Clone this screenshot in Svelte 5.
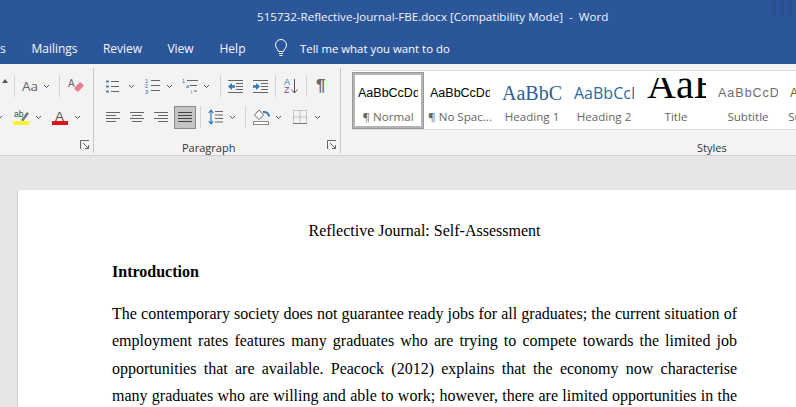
<script>
  const tabs = [
    { label: 's', width: 18 },
    { label: 'Mailings', width: 73 },
    { label: 'Review', width: 63 },
    { label: 'View', width: 53 },
    { label: 'Help', width: 51 }
  ];
  const styles = [
    { sample: 'AaBbCcDd', name: '¶ Normal', cls: 'normal' },
    { sample: 'AaBbCcDd', name: '¶ No Spac...', cls: 'normal' },
    { sample: 'AaBbCc', name: 'Heading 1', cls: 'h1' },
    { sample: 'AaBbCcDd', name: 'Heading 2', cls: 'h2' },
    { sample: 'AaBbC', name: 'Title', cls: 'title' },
    { sample: 'AaBbCcDd', name: 'Subtitle', cls: 'subtitle' },
    { sample: 'AaBbCcDd', name: 'Subtle Em...', cls: 'subtle' }
  ];
</script>

{#snippet chev()}
  <svg class="chev" width="7" height="5" viewBox="0 0 7 5"><path d="M1 1l2.500 2.500L6 1" fill="none" stroke="#555" stroke-width="1"/></svg>
{/snippet}

{#snippet launcher()}
  <svg class="launcher" width="10" height="10" viewBox="0 0 10 10"><path d="M.5 9V.5H9M3 3l5.500 5.500M8.500 5v3.500H5" fill="none" stroke="#666" stroke-width="1"/></svg>
{/snippet}

{#snippet lines(rows)}
  <svg width="16" height="14" viewBox="0 0 16 14">
    {#each rows as r, i}
      <path d={`M${r[0]} ${2.5 + i * 3}H${r[1]}`} stroke="#666" stroke-width="1"/>
    {/each}
  </svg>
{/snippet}

<div class="word">
  <header class="titlebar">
    <div class="doc-title">515732-Reflective-Journal-FBE.docx [Compatibility Mode]&nbsp; -&nbsp; Word</div>
    <nav class="tabs">
      {#each tabs as t}
        <span class="tab" style="width:{t.width}px">{t.label}</span>
      {/each}
      <svg class="bulb" width="14" height="18" viewBox="0 0 14 18"><path d="M4.500 12.500C4 10 1.500 9 1.500 6a5.500 5.500 0 0 1 11 0c0 3-2.500 4-3 6.500zM5 14.500h4M5.500 16.500h3" fill="none" stroke="#fff" stroke-width="1"/></svg>
      <span class="tell">Tell me what you want to do</span>
    </nav>
  </header>

  <section class="ribbon">
    <div class="group font">
      <div class="row r1 font-r1">
        <svg class="up" width="6" height="4" viewBox="0 0 6 4"><path d="M0 4l3-4 3 4z" fill="#555"/></svg>
        <i class="sep"></i>
        <span class="aa">Aa</span>
        {@render chev()}
        <i class="sep"></i>
        <svg width="16" height="16" viewBox="0 0 16 16"><path d="M6.500 10.500l5.500-6 3.500 3-5.500 6z" fill="#e87d8c" stroke="#e87d8c" stroke-linejoin="round"/><text x="0" y="9" font-size="10" fill="#666" font-family="Liberation Sans">A</text></svg>
      </div>
      <div class="row r2 font-r2">
        {@render chev()}
        <svg width="17" height="17" viewBox="0 0 17 17"><text x="1" y="8" font-size="8.500" fill="#444" font-family="Liberation Sans">ab</text><path d="M8 11l6-8 2 1.500-6 8z" fill="#777"/><rect x="0" y="12" width="16" height="4" fill="#f9f22f"/></svg>
        {@render chev()}
        <svg width="16" height="17" viewBox="0 0 16 17"><text x="3" y="11.500" font-size="13.500" fill="#555" font-family="Liberation Sans">A</text><rect x="0" y="12" width="16" height="4" fill="#e0111d"/></svg>
        {@render chev()}
      </div>
      {@render launcher()}
    </div>

    <div class="group para">
      <div class="row r1 para-r1">
        <svg width="16" height="15" viewBox="0 0 16 15"><path d="M6 2.500h8M6 7.500h8M6 12.500h8" stroke="#666"/><path d="M1 2.500h3M1 7.500h3M1 12.500h3" stroke="#5a88b5" stroke-width="2"/></svg>
        {@render chev()}
        <svg width="16" height="16" viewBox="0 0 16 16"><path d="M6 2.500h9M6 7.500h9M6 12.500h9" stroke="#666"/><text x="0" y="5" font-size="5.500" fill="#2b6aa8" font-family="Liberation Sans">1</text><text x="0" y="10" font-size="5.500" fill="#2b6aa8" font-family="Liberation Sans">2</text><text x="0" y="15.500" font-size="5.500" fill="#2b6aa8" font-family="Liberation Sans">3</text></svg>
        {@render chev()}
        <svg width="17" height="16" viewBox="0 0 17 16"><path d="M5 2.500h11M8 7.500h7M12 13h3" stroke="#666"/><text x="0" y="5" font-size="5.500" fill="#2b6aa8" font-family="Liberation Sans">1</text><text x="4" y="10" font-size="5.500" fill="#2b6aa8" font-family="Liberation Sans">a</text><text x="9" y="15.500" font-size="5.500" fill="#2b6aa8" font-family="Liberation Sans">i</text></svg>
        {@render chev()}
        <i class="sep"></i>
        <svg width="17" height="13" viewBox="0 0 17 13"><path d="M1 .5h15M9 3.500h7M9 6.500h7M9 9.500h7M1 12.500h15" stroke="#666"/><path d="M1 6.500l4-3.500v2.200h3v2.600H5V10z" fill="#2f79b9"/></svg>
        <svg width="17" height="13" viewBox="0 0 17 13"><path d="M1 .5h15M9 3.500h7M9 6.500h7M9 9.500h7M1 12.500h15" stroke="#666"/><path d="M8 6.500L4 3v2.200H1v2.600h3V10z" fill="#2f79b9"/></svg>
        <i class="sep"></i>
        <span class="sort"><span class="az"><b class="a">A</b><b class="z">Z</b></span><svg width="7" height="15" viewBox="0 0 7 15"><path d="M3.500 0v14M.5 10.500l3 3.500 3-3.500" fill="none" stroke="#555"/></svg></span>
        <i class="sep"></i>
        <span class="pilcrow">¶</span>
      </div>
      <div class="row r2 para-r2">
        {@render lines([[1,15],[1,11],[1,15],[1,11]])}
        {@render lines([[1,15],[3,13],[1,15],[3,13]])}
        {@render lines([[1,15],[5,15],[1,15],[5,15]])}
        <span class="align-active">{@render lines([[1,15],[1,15],[1,15],[1,15]])}</span>
        <i class="sep"></i>
        <svg width="16" height="16" viewBox="0 0 16 16"><path d="M7 2.500h8M7 6h8M7 9.500h8M7 13h8" stroke="#666"/><path d="M3 1v14M.8 4L3 1l2.200 3M.8 12L3 15l2.200-3" fill="none" stroke="#2f79b9" stroke-width="1.200"/></svg>
        {@render chev()}
        <i class="sep"></i>
        <svg width="17" height="16" viewBox="0 0 17 16"><path d="M6 1L1.500 6 6 10.500 10.500 6z" fill="#fff" stroke="#666"/><path d="M10 3c3.500-.5 6 1.500 6 4.500" fill="none" stroke="#2f79b9" stroke-width="2"/><rect x=".5" y="12.500" width="15" height="3" fill="#fff" stroke="#888"/></svg>
        {@render chev()}
        <svg width="14" height="14" viewBox="0 0 14 14"><path d="M.5.500h13v13H.5zM7 .5v13M.5 7h13" fill="none" stroke="#999" stroke-dasharray="1 1"/><path d="M0 13.500h14" stroke="#777"/></svg>
        {@render chev()}
      </div>
      <span class="group-label para-label">Paragraph</span>
      {@render launcher()}
    </div>

    <div class="group styles-group">
      <div class="gallery">
        {#each styles as s, i}
          <div class="style" class:selected={i === 0}>
            <div class="sample {s.cls}">{s.sample}</div>
            <div class="name">{s.name}</div>
          </div>
        {/each}
      </div>
      <span class="group-label styles-label">Styles</span>
    </div>
  </section>

  <main class="canvas">
    <article class="page">
      <h1>Reflective Journal: Self-Assessment</h1>
      <h2>Introduction</h2>
      <p>The contemporary society does not guarantee ready jobs for all graduates; the current situation of employment rates features many graduates who are trying to compete towards the limited job opportunities that are available. Peacock (2012) explains that the economy now characterise many graduates who are willing and able to work; however, there are limited opportunities in the market for all of them to be employed at once and this is the challenge.</p>
    </article>
  </main>
</div>

<style>
  :global(body) {
    margin: 0;
    overflow: hidden;
  }
  .word {
    width: 796px;
    height: 407px;
    overflow: hidden;
    font-family: "Open Sans", "Noto Sans", sans-serif;
    background: #e6e6e6;
    display: flex;
    flex-direction: column;
  }
  .titlebar {
    position: relative;
    height: 64px;
    background: #2b579a;
    color: #fff;
    flex: none;
  }
  /* faint window stripes showing through at the top right */
  .titlebar::after {
    content: "";
    position: absolute;
    top: 0;
    right: 0;
    width: 24px;
    height: 16px;
    background: repeating-linear-gradient(90deg, #27508f 0 4px, #2b579a 4px 8px);
  }
  .doc-title {
    padding: 9px 0 0 257px;
    height: 23px;
    white-space: nowrap;
    line-height: 15px;
    font-size: 11.6px;
    color: #f2f4f8;
  }
  .tabs {
    display: flex;
    align-items: center;
    height: 32px;
  }
  .tab {
    flex: none;
    text-align: center;
    font-size: 12px;
    color: #f4f6fa;
  }
  .tab:first-child {
    text-align: right;
    padding-right: 13px;
    box-sizing: border-box;
  }
  .bulb {
    margin-left: 16px;
    margin-right: 12px;
  }
  .tell {
    font-size: 11.4px;
    white-space: nowrap;
  }
  .ribbon {
    height: 92px;
    flex: none;
    display: flex;
    background: #f3f3f3;
    border-bottom: 1px solid #d0d0d0;
    box-sizing: border-box;
    padding-top: 4px;
  }
  .group {
    position: relative;
    flex: none;
    box-sizing: border-box;
    height: 85px;
    border-right: 1px solid #c6c6c6;
  }
  .font {
    width: 94px;
  }
  .para {
    width: 247px;
  }
  .styles-group {
    flex: 1;
    border-right: none;
  }
  .row {
    display: grid;
    align-items: center;
    justify-items: start;
    height: 30px;
  }
  .r1 {
    margin-top: 3px;
  }
  .r2 {
    margin-top: 1px;
  }
  .sep {
    display: block;
    width: 1px;
    height: 22px;
    background: #d4d4d4;
  }
  .font-r1 {
    padding-left: 2px;
    grid-template-columns: 12px 8px 21px 16px 9px auto;
  }
  .up {
    margin-top: -11px;
  }
  .aa {
    font-size: 13.5px;
    color: #666;
  }
  .font-r2 {
    margin-left: -4px;
    grid-template-columns: 17px 22px 17px 22px auto;
  }
  .para-r1 {
    padding-left: 11px;
    grid-template-columns: 23px 17px 21px 16px 21px 17px 7px 25px 23px 9px 22px 10px auto;
  }
  .sort {
    display: flex;
    align-items: center;
    gap: 1px;
  }
  .az {
    display: flex;
    flex-direction: column;
    font: 400 9px/8px "Liberation Sans", sans-serif;
  }
  .az b {
    font-weight: 400;
  }
  .a {
    color: #2f79b9;
  }
  .z {
    color: #8a4fa8;
  }
  .pilcrow {
    font: 700 17px/20px "Liberation Sans", sans-serif;
    color: #666;
  }
  .para-r2 {
    padding-left: 11px;
    grid-template-columns: 24px 24px 21px 26px 8px 21px 16px 8px 22px 18px 21px auto;
  }
  .align-active {
    display: flex;
    width: 22px;
    height: 23px;
    box-sizing: border-box;
    align-items: center;
    justify-content: center;
    background: #c4c4c4;
    border: 1px solid #8a8a8a;
  }
  .align-active :global(path) {
    stroke: #444;
  }
  .group-label {
    position: absolute;
    top: 72px;
    font-size: 11px;
    line-height: 15px;
    color: #333;
  }
  .para-label {
    left: 88px;
  }
  .styles-label {
    left: 356px;
  }
  :global(.launcher) {
    position: absolute;
    right: 3px;
    bottom: 3px;
  }
  .gallery {
    display: flex;
    height: 60px;
    margin-top: 2px;
    margin-left: 11px;
    background: #fff;
    border-top: 1px solid #dcdcdc;
    border-bottom: 1px solid #dcdcdc;
    box-sizing: border-box;
    overflow: hidden;
  }
  .style {
    position: relative;
    flex: none;
    width: 72px;
    text-align: center;
  }
  .style.selected::before {
    content: "";
    position: absolute;
    inset: 1px 0 0;
    border: 3px solid #b4b4b4;
    outline: 1px solid #9a9a9a;
    outline-offset: -1px;
  }
  .sample {
    height: 38px;
    margin: 0 6px;
    box-sizing: border-box;
    line-height: 44px;
    text-align: left;
    white-space: nowrap;
    overflow: hidden;
    color: #000;
    font-size: 12.5px;
    font-family: "Liberation Sans", sans-serif;
  }
  .name {
    font-size: 11.6px;
    line-height: 15px;
    color: #666;
    white-space: nowrap;
  }
  .h1 {
    font: 20px/44px "Liberation Serif", serif;
    color: #2e5e92;
  }
  .h2 {
    font: 16px/44px "Open Sans", sans-serif;
    color: #2e6aa0;
  }
  .title {
    height: 31px;
    margin-top: 7px;
    margin-left: 7px;
    font: 40px/13px "Liberation Serif", serif;
  }
  .subtitle {
    letter-spacing: 1px;
    color: #6b6b6b;
  }
  .subtle {
    color: #7f6000;
  }
  .canvas {
    flex: 1;
    padding: 34px 0 0 17px;
    min-height: 0;
  }
  .page {
    background: #fff;
    height: 400px;
    border-left: 1px solid #cfcfcf;
    box-sizing: border-box;
    padding: 30px 59px 0 94px;
    font-family: "Liberation Serif", serif;
    color: #000;
    font-size: 16px;
  }
  h1 {
    margin: 0;
    font-size: inherit;
    font-weight: 400;
    text-align: center;
    line-height: 22px;
  }
  h2 {
    margin: 19px 0 0;
    font-size: inherit;
    font-weight: 700;
    line-height: 22px;
  }
  p {
    margin: 17px 0 0;
    line-height: 27.300px;
    text-align: justify;
  }
</style>
